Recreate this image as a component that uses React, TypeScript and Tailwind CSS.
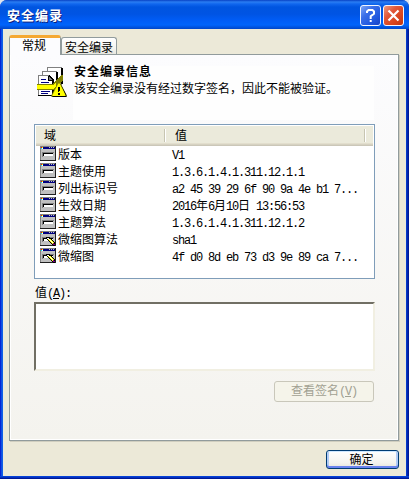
import { ReactNode } from 'react';
import clsx from 'clsx';

const rows = [
  { field: '版本', value: 'V1' },
  { field: '主题使用', value: '1.3.6.1.4.1.311.12.1.1' },
  { field: '列出标识号', value: 'a2 45 39 29 6f 90 9a 4e b1 7...' },
  { field: '生效日期', value: '2016年6月10日 13:56:53' },
  { field: '主题算法', value: '1.3.6.1.4.1.311.12.1.2' },
  { field: '微缩图算法', value: 'sha1', editable: true },
  { field: '微缩图', value: '4f d0 8d eb 73 d3 9e 89 ca 7...', editable: true },
];

// half-width text takes exactly 6px per character, full-width 12px
function Mono({ children }: { children: ReactNode }) {
  return <span className="font-['Liberation_Mono',monospace] tracking-[-1.2px]">{children}</span>;
}

function MixedText({ text }: { text: string }) {
  const parts = text.match(/[\x20-\x7e]+|[^\x20-\x7e]+/g) ?? [];
  return (
    <>
      {parts.map((part, i) => (/^[\x20-\x7e]/.test(part) ? <Mono key={i}>{part}</Mono> : <span key={i}>{part}</span>))}
    </>
  );
}

function FieldIcon({ editable }: { editable?: boolean }) {
  return (
    <svg width="16" height="15" viewBox="0 0 16 15" shapeRendering="crispEdges" className="shrink-0">
      <rect width="16" height="15" fill="#202020" />
      <rect width="15" height="14" fill="#808080" />
      <rect x="1" y="1" width="14" height="13" fill="#c0c0c0" />
      <rect x="1" y="1" width="14" height="2" fill="#000080" />
      <path d="M1 1h1v1h-1z" fill="#f00" />
      <path d="M2 1h1v1h-1z" fill="#ff0" />
      <path d="M1 2h1v1h-1z" fill="#0ff" />
      <path d="M2 2h1v1h-1z" fill="#fff" />
      <path d="M9 1h1v1h-1zM11 1h1v1h-1zM13 1h1v1h-1z" fill="#c0c0c0" />
      <path d="M2 6h12v1h-12zM2 7h1v4h-1z" fill="#808080" />
      <path d="M3 7h10v1h-10zM3 8h1v2h-1z" fill="#000" />
      <rect x="4" y="8" width="9" height="2" fill="#fff" />
      {editable && (
        <>
          <path d="M6 6h4v1h1v1h1v1h1v1h1v1h1v4h-2v-1h-1v-1h-1v-1h-1v-1h-1v-1h-1v-1h-1v-1h-1z" fill="#000" />
          <path d="M7 7h2v1h1v1h1v1h1v1h1v1h-1v-1h-1v-1h-1v-1h-1v-1h-2z" fill="#fff" />
          <path d="M8 8h1v1h1v1h1v1h1v1h1v1h-1v-1h-1v-1h-1v-1h-1v-1h-1zM10 8h1v1h1v1h1v1h1v1h-1v-1h-1v-1h-1v-1h-1z" fill="#ff0" />
          <path d="M13 12h1v1h1v1h-2z" fill="#800080" />
        </>
      )}
    </svg>
  );
}

function CatalogIcon() {
  return (
    <svg width="30" height="32" viewBox="0 0 30 32" shapeRendering="crispEdges" className="shrink-0">
      <path d="M10 1h15v18h-15z" fill="#808080" />
      <path d="M11 2h13v17h-13z" fill="#fff" />
      <path d="M24 2h2v16h-2z" fill="#000" />
      <path d="M5 5h15v19h-15z" fill="#808080" />
      <path d="M6 6h13v18h-13z" fill="#fff" />
      <path d="M19 6h2v14h-2z" fill="#000" />
      <path d="M1 9h11l4 4v17h-15z" fill="#808080" />
      <path d="M2 10h10v4h3v15h-13z" fill="#fff" />
      <path d="M12 9h1v1h1v1h1v1h1v1h1v17h-2v-15h-4v-5h1v4h3v-1h-1v-1h-1v-1h-1zM1 29h16v1h-16z" fill="#000" />
      <path d="M4 13h5v1h-5zM4 16h8v1h-8zM4 25h9v1h-9zM4 27h7v1h-7z" fill="#000080" />
      <path d="M0 18h15l10-9h1v5l-8 10h-18z" fill="#808000" />
      <path d="M0 19h16l3-3v4l-3 3h-16z" fill="#ff0" />
      <path d="M21.5 16h1.5l6.5 13v2h-15v-2z" fill="#808000" shapeRendering="auto" />
      <path d="M23 17l6.5 12v2h-14v-1h13z" fill="#000" shapeRendering="auto" />
      <path d="M21.3 17.5h1.4l5.8 11.5v1h-13v-1z" fill="#ff0" shapeRendering="auto" />
      <path d="M21 21h2v4h-1v1h-1zM21 27h2v2h-2z" fill="#000" />
    </svg>
  );
}

function HelpGlyph() {
  return (
    <svg width="13" height="15" viewBox="0 0 13 15" fill="none" stroke="#fff">
      <path d="M3 5V3.5L4.5 2h4L10 3.5v2.2L6.7 8.3V11" strokeWidth="2" />
      <path d="M5.7 12h2v2h-2z" fill="#fff" stroke="none" />
    </svg>
  );
}

function CloseGlyph() {
  return (
    <svg width="13" height="13" viewBox="0 0 13 13" fill="none" stroke="#fff" strokeWidth="2.2">
      <path d="M1.5 1.5l10 10M11.5 1.5l-10 10" />
    </svg>
  );
}

function TitleButton({ close, label, children }: { close?: boolean; label: string; children: ReactNode }) {
  return (
    <button
      type="button"
      aria-label={label}
      className={clsx(
        'flex h-[21px] w-[21px] items-center justify-center rounded-[3px] border border-[#f3f6ff]',
        close
          ? 'bg-[linear-gradient(135deg,#ee9a80,#e1583a_35%,#d8441c_70%,#bd3512)]'
          : 'bg-[linear-gradient(135deg,#7da5f5,#3a6ee8_35%,#2158df_70%,#1743c4)]',
      )}
    >
      {children}
    </button>
  );
}

export default function App() {
  return (
    <div className="h-[479px] w-[409px] overflow-hidden bg-[#dfe4ee] font-['Noto_Sans_CJK_SC',sans-serif] text-[12px] leading-[17px] text-black">
      <div className="flex h-full flex-col rounded-t-[7px] bg-[linear-gradient(90deg,#0019cf,#0831d9_1px,#166aee_2px,#0855dd_3px,#0855dd_406px,#0441d8_406px,#001ea0_408px,#00138c)]">
        <div className="flex h-[29px] shrink-0 items-center justify-between rounded-t-[7px] bg-[linear-gradient(180deg,#0842c4,#2a7df2_2px,#1066ee_4px,#0055e0_7px,#0054e3_14px,#005cf5_20px,#0064fb_25px,#0046c8_29px)] pt-[2px] pr-[5px] pl-[7px]">
          <span className="pb-[2px] text-[13px] font-bold tracking-[1px] text-white [text-shadow:1px_1px_0_#0f1e7a]">安全编录</span>
          <div className="flex gap-[2px]">
            <TitleButton label="帮助">
              <HelpGlyph />
            </TitleButton>
            <TitleButton close label="关闭">
              <CloseGlyph />
            </TitleButton>
          </div>
        </div>

        <div className="mx-[3px] flex h-[447px] shrink-0 flex-col bg-[#ece9d8] px-[6px] pt-[6px]">
          <div className="flex h-[19px] shrink-0 items-end">
            <div className="z-10 -mb-px flex h-[20px] w-[52px] justify-center overflow-hidden rounded-t-[3px] border-x border-t-[3px] border-x-[#919b9c] border-t-[#f5a832] bg-[#fcfcfe] pr-[2px]">
              <span className="leading-[13px]">常规</span>
            </div>
            <div className="flex h-[17px] w-[56px] justify-center rounded-t-[3px] border border-b-0 border-[#919b9c] bg-[linear-gradient(180deg,#fff,#f3f3ee_70%,#e6e6de)]">
              <span className="whitespace-nowrap leading-[17px]">安全编录</span>
            </div>
          </div>

          <div className="flex h-[387px] w-[390px] shrink-0 flex-col border border-[#919b9c] bg-[linear-gradient(180deg,#fcfcfe,#f4f3ee)] px-[24px] shadow-[inset_-1px_-1px_0_#fff,inset_1px_0_0_#fff,1px_1px_0_#d0cebf]">
            <div className="flex h-[69px] shrink-0 pt-[11px] pl-[3px]">
              <CatalogIcon />
              <div className="ml-[6px] h-[54px] flex-1 bg-[#fefefe]">
                <p className="-mt-[4px] pl-px font-bold tracking-[1px]">安全编录信息</p>
                <p className="pl-px">该安全编录没有经过数字签名，因此不能被验证。</p>
              </div>
            </div>

            <div className="flex h-[155px] w-[341px] shrink-0 flex-col border border-[#7f9db9] bg-white px-px pt-px">
              <div className="flex h-[20px] shrink-0 bg-[linear-gradient(180deg,#ebeadb_17px,#e2decd_17px,#e2decd_18px,#d6d2c2_18px,#d6d2c2_19px,#cbc7b8_19px)]">
                <div className="flex w-[130px] justify-between pl-[8px]">
                  <span className="leading-[18px]">域</span>
                  <i className="mt-[3px] h-[13px] w-[2px] border-r border-l border-r-white border-l-[#c7c5b2]" />
                </div>
                <div className="flex w-[200px] justify-between pl-[9px]">
                  <span className="leading-[18px]">值</span>
                  <i className="mt-[3px] h-[13px] w-[2px] border-r border-l border-r-white border-l-[#c7c5b2]" />
                </div>
              </div>
              {rows.map((row) => (
                <div key={row.field} className="flex h-[17px] shrink-0 items-start pl-[4px]">
                  <FieldIcon editable={row.editable} />
                  <span className="w-[116px] pl-[2px] leading-[15px]">{row.field}</span>
                  <span className="whitespace-nowrap leading-[15px]">
                    <MixedText text={row.value} />
                  </span>
                </div>
              ))}
            </div>

            <label htmlFor="value" className="mt-[4px] h-[19px] shrink-0 pl-px">
              值
              <Mono>
                (<u>A</u>):
              </Mono>
            </label>
            <textarea
              id="value"
              readOnly
              className="block h-[69px] w-[341px] shrink-0 resize-none border-2 border-t-[#716f64] border-r-[#f1efe2] border-b-[#f1efe2] border-l-[#716f64] bg-white outline-none"
            />

            <button
              type="button"
              disabled
              className="mt-[10px] flex h-[21px] w-[100px] shrink-0 items-center justify-center self-end rounded-[3px] border border-[#c9c7ba] bg-[#f5f4ea] pb-px text-[#a1a192]"
            >
              <span>
                查看签名
                <Mono>
                  (<u>V</u>)
                </Mono>
              </span>
            </button>
          </div>

          <button
            type="button"
            className="mt-[9px] mr-[1px] flex h-[19px] w-[73px] shrink-0 items-center justify-center self-end rounded-[3px] border border-[#003c74] bg-[linear-gradient(180deg,#fff,#f4f3ee_70%,#e6e4da)] pr-[2px] pb-[2px] shadow-[inset_0_1px_0_#cee7ff,inset_0_-2px_0_#6982ee,inset_2px_0_0_#b1cbf5,inset_-2px_0_0_#b1cbf5]"
          >
            确定
          </button>
        </div>

        <div className="h-[3px] shrink-0 bg-[linear-gradient(180deg,#0441d8_1px,#001ea0_2px,#00138c)]" />
      </div>
    </div>
  );
}
